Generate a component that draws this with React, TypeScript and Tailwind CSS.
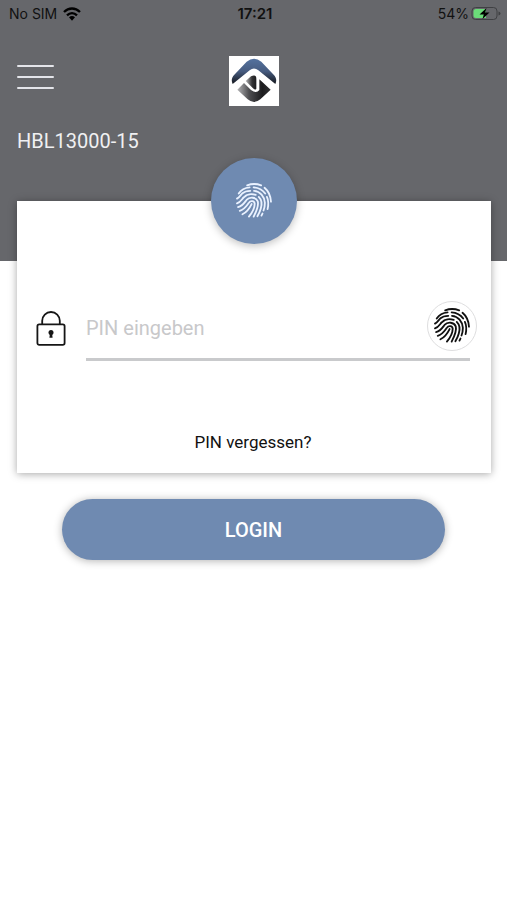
import React from "react";

const FingerprintIcon: React.FC<{ className?: string }> = ({ className }) => (
  <svg
    viewBox="0 0 106 106"
    className={className}
    fill="none"
    stroke="currentColor"
    strokeWidth="5.4"
    strokeLinecap="round"
    aria-hidden="true"
  >
    <path d="M33 7C46 2 61 2 74 7" />
    <path d="M84 14C96 24 102 38 103 55" />
    <path d="M8 31C15 20 27 14 40 13" />
    <path d="M52 13C66 14 78 20 86 31" />
    <path d="M91 41C96 52 96 64 93 77" />
    <path d="M3 46C10 42 13 36 18 31C25 25 33 23 42 23" />
    <path d="M53 23C71 24 84 40 85 58C85 68 83 76 81 81" />
    <path d="M78 90L75 96" />
    <path d="M3 60C13 57 17 48 23 42C32 32 47 31 58 35" />
    <path d="M67 41C76 50 77 62 73 75C71 83 67 91 63 98" />
    <path d="M6 71C19 68 25 58 31 50C40 40 59 41 64 54C67 65 62 80 52 99" />
    <path d="M11 82C25 78 31 67 38 58C43 51 54 52 55 61C55 74 47 88 38 99" />
    <path d="M19 92C34 85 40 74 46 62" />
  </svg>
);

const LockIcon: React.FC = () => (
  <svg
    viewBox="0 0 30 36"
    className="w-[30px] h-9 shrink-0"
    fill="none"
    stroke="#161616"
    strokeWidth="1.8"
    role="img"
    aria-label="PIN"
  >
    <rect x="1.4" y="14.4" width="27.2" height="20.4" rx="1.8" />
    <path d="M6.2 14V10.8a8.8 8.8 0 0 1 17.6 0V14" />
    <circle cx="15" cy="22.6" r="2.5" fill="#161616" stroke="none" />
    <path d="M14 23h2l.6 4.8h-3.2z" fill="#161616" stroke="none" />
  </svg>
);

const Logo: React.FC = () => (
  <svg viewBox="0 0 150 150" className="size-[50px]" role="img" aria-label="Logo">
    <defs>
      <linearGradient id="roof" x1="0" y1="0" x2="0" y2="1">
        <stop offset="0" stopColor="#54729f" />
        <stop offset="0.5" stopColor="#475c80" />
        <stop offset="1" stopColor="#15181e" />
      </linearGradient>
      <linearGradient id="base" x1="0" y1="0" x2="1" y2="0">
        <stop offset="0" stopColor="#b4b4b6" />
        <stop offset="0.35" stopColor="#4e4e51" />
        <stop offset="0.75" stopColor="#1c1c1e" />
        <stop offset="1" stopColor="#303032" />
      </linearGradient>
      <linearGradient id="stem" x1="0" y1="0" x2="1" y2="0">
        <stop offset="0" stopColor="#b8b8ba" />
        <stop offset="0.6" stopColor="#333335" />
        <stop offset="1" stopColor="#1c1c1e" />
      </linearGradient>
    </defs>
    <path d="M0 0h150v150H0z" fill="#fff" />
    <path
      d="M11 84C6 74 8 64 16 56L53 17Q75 -1 97 17L134 56C142 64 144 74 139 84L88 43Q75 32 62 43Z"
      fill="url(#roof)"
    />
    <path
      d="M25 101L45 81L66 102Q82 114 91 102V70L125 101L94 130Q75 146 56 130Z"
      fill="url(#base)"
    />
    <path d="M50 75L66 61Q82 54 82 68V98Q79 104 72 97Z" fill="url(#stem)" />
  </svg>
);

const WifiIcon: React.FC = () => (
  <svg viewBox="0 0 54 42" className="w-[18px] h-3.5" aria-hidden="true">
    <g fill="none" stroke="#000" strokeWidth="7">
      <path d="M3 15C17 1 37 1 51 15" />
      <path d="M12 25C21 16 33 16 42 25" />
    </g>
    <path d="M18 31Q27 23 36 31L27 41Z" />
  </svg>
);

const BatteryIcon: React.FC = () => (
  <svg viewBox="0 0 30 16" className="w-[30px] h-4" aria-hidden="true">
    <rect x="1" y="1.5" width="25" height="12" rx="3.5" fill="none" stroke="#3f4043" />
    <path d="M5 3h10v9H5A2.5 2.5 0 0 1 2.5 9.5V5.5A2.5 2.5 0 0 1 5 3z" fill="#6bdc79" />
    <path d="M27.5 5.5v4q2-.6 2-2t-2-2z" fill="#3f4043" />
    <path d="M15.5 2L8.5 8.5h4.3l-1.3 4.5L18.5 6.5h-4.3z" fill="#000" />
  </svg>
);

const StatusBar: React.FC = () => (
  <div className="grid grid-cols-3 items-center h-7 pl-[9px] pr-1.5 font-[Inter,sans-serif] text-[14px] leading-5 text-[#111]">
    <div className="flex items-center gap-1.5">
      <span>No SIM</span>
      <WifiIcon />
    </div>
    <span className="text-center text-[15px] font-semibold">17:21</span>
    <div className="flex items-center justify-end gap-0.5">
      <span>54%</span>
      <BatteryIcon />
    </div>
  </div>
);

const App: React.FC = () => {
  const [pin, setPin] = React.useState<string>("");

  return (
    <div className="min-h-screen bg-white pb-8 font-[Roboto,sans-serif]">
      <header className="bg-[#66676b] pb-[108px]">
        <StatusBar />
        <div className="grid grid-cols-3 items-center pl-[17px] pr-4 pt-7">
          <button
            type="button"
            aria-label="Menü"
            className="flex flex-col gap-[9px] w-[37px] pb-2"
          >
            <span className="h-0.5 w-full rounded bg-[#e4e5ea]" />
            <span className="h-0.5 w-full rounded bg-[#e4e5ea]" />
            <span className="h-0.5 w-full rounded bg-[#e4e5ea]" />
          </button>
          <div className="flex justify-center">
            <Logo />
          </div>
        </div>
        <p className="px-[17px] pt-[23px] text-[20px] leading-6 text-[#f0f0f2]">
          HBL13000-15
        </p>
      </header>

      <main>
        <form onSubmit={(e) => e.preventDefault()}>
          <div className="relative ml-[17px] mr-4 -mt-[60px] bg-white pl-[19px] pr-[21px] pt-[100px] pb-[19px] shadow-[0_1px_8px_rgba(0,0,0,0.35)]">
            <div className="absolute -top-[43px] inset-x-0 flex justify-center">
              <div className="flex size-[86px] items-center justify-center rounded-full bg-[#6f8ab1] text-[#eaf2ff] shadow-[0_2px_8px_rgba(0,0,0,0.25)]">
                <FingerprintIcon className="size-9" />
              </div>
            </div>

            <div className="relative flex items-center gap-5">
              <label htmlFor="pin" className="pb-1.5">
                <LockIcon />
              </label>
              <input
                id="pin"
                type="password"
                inputMode="numeric"
                placeholder="PIN eingeben"
                value={pin}
                onChange={(e) => setPin(e.target.value)}
                className="min-w-0 grow h-[60px] border-b-[3px] border-[#c9cacc] pr-12 pb-1 text-[20px] leading-6 outline-none placeholder:text-[#c8c8ca]"
              />
              <button
                type="button"
                aria-label="Fingerabdruck verwenden"
                className="absolute -right-[7px] top-0 flex size-[50px] items-center justify-center rounded-full border border-[#dededf] bg-white text-[#111]"
              >
                <FingerprintIcon className="size-9" />
              </button>
            </div>

            <div className="flex justify-center pt-[69px]">
              <a href="#" className="text-[17px] leading-6 text-[#111]">
                PIN vergessen?
              </a>
            </div>
          </div>

          <div className="px-[62px] pt-[26px]">
            <button
              type="submit"
              className="w-full h-[61px] rounded-full bg-[#6f8ab1] text-[20px] leading-6 font-medium text-white shadow-[0_1px_8px_rgba(0,0,0,0.3)]"
            >
              LOGIN
            </button>
          </div>
        </form>
      </main>
    </div>
  );
};

export default App;
